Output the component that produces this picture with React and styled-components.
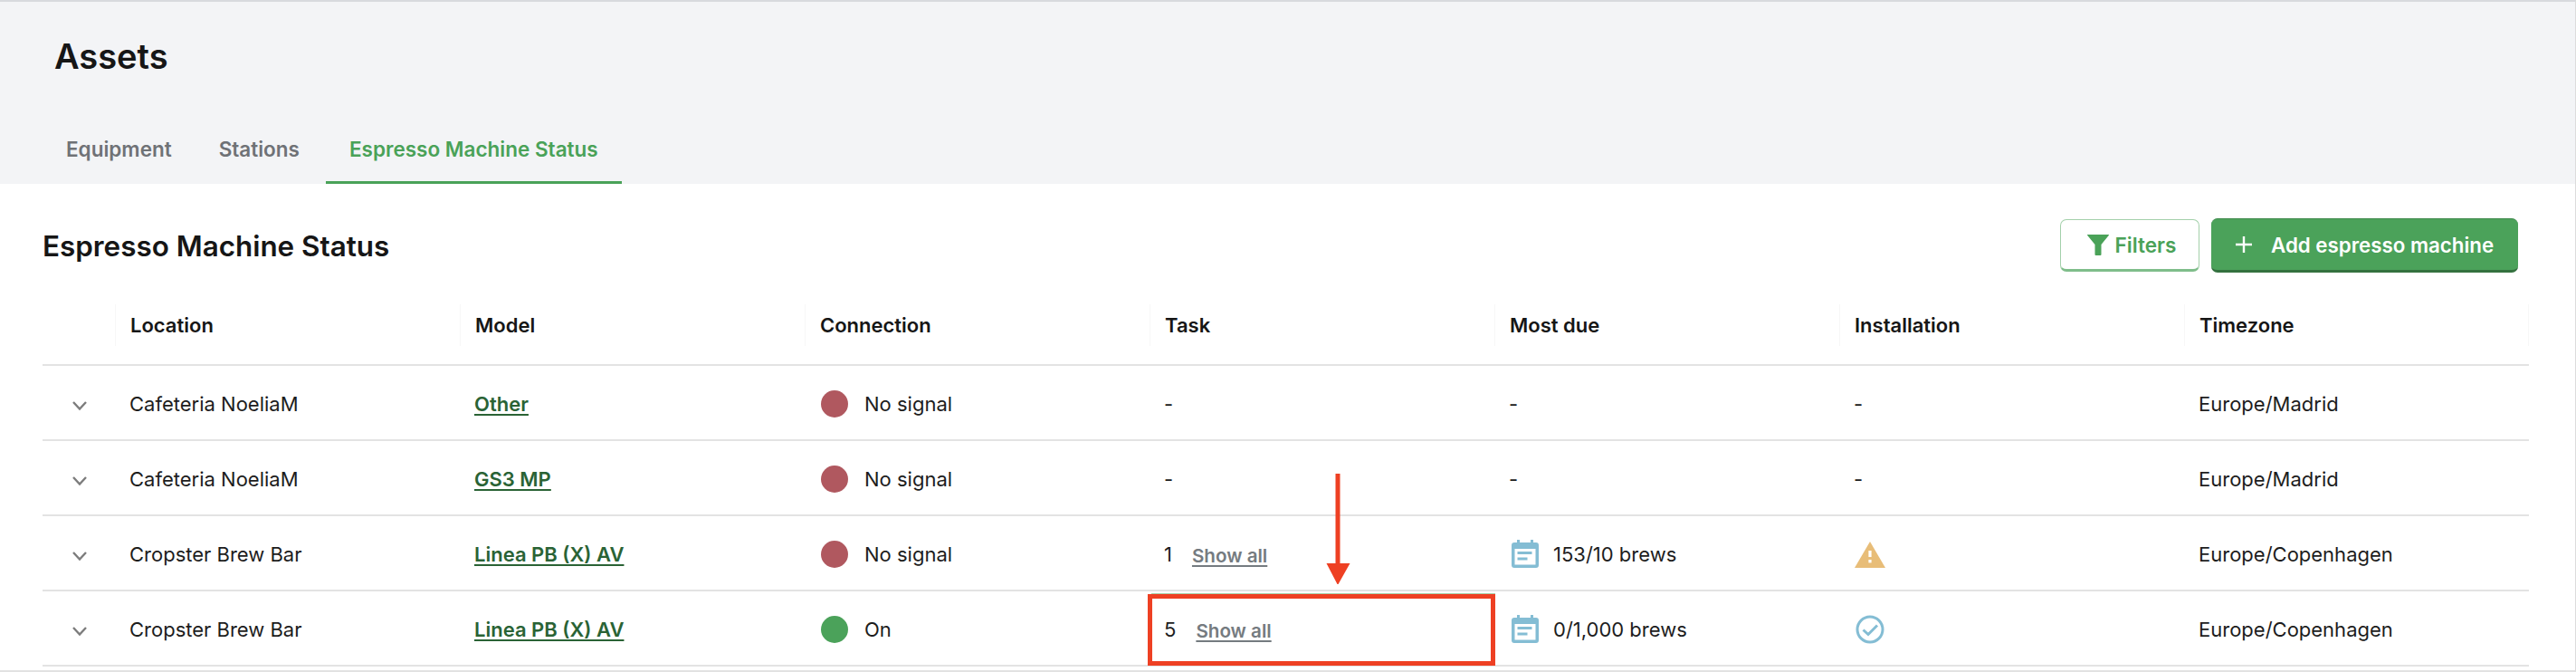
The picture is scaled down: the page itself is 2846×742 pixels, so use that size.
import React from "react";
import styled, { createGlobalStyle } from "styled-components";

const GlobalStyle = createGlobalStyle`
  html, body {
    margin: 0;
    padding: 0;
    background: #ffffff;
  }
  * {
    box-sizing: border-box;
  }
`;

const Page = styled.div`
  position: relative;
  width: 2846px;
  height: 742px;
  overflow: hidden;
  background: #ffffff;
  color: #1a1a1a;
  font-family: Inter, "Liberation Sans", sans-serif;
  border-top: 2px solid #d8dadd;
  border-right: 1px solid #dcdcdc;
  border-bottom: 2px solid #e2e2e2;
`;

const Header = styled.header`
  height: 201px;
  background: #f3f4f6;
  display: flex;
  flex-direction: column;
  justify-content: space-between;
`;

const PageTitle = styled.h1`
  margin: 0;
  padding: 38px 0 0 60px;
  font-size: 38px;
  line-height: 44px;
  font-weight: 600;
  color: #161616;
`;

const Tabs = styled.nav`
  display: flex;
  padding-left: 47px;
`;

const Tab = styled.div`
  height: 60px;
  margin-left: ${(p) => (p.$active ? "3px" : "0")};
  padding: 0 26px 14px;
  display: flex;
  align-items: center;
  font-size: 22.5px;
  font-weight: 600;
  color: ${(p) => (p.$active ? "#4aa258" : "#6f7276")};
  border-bottom: 3px solid ${(p) => (p.$active ? "#4aa258" : "transparent")};
`;

const Section = styled.section`
  padding: 0 51px 0 47px;
`;

const Toolbar = styled.div`
  height: 133px;
  padding: 38px 12px 0 0;
  display: flex;
  align-items: flex-start;
  justify-content: space-between;
`;

const SectionTitle = styled.h2`
  margin: 0;
  padding-top: 9px;
  font-size: 31.4px;
  line-height: 44px;
  font-weight: 600;
  color: #161616;
`;

const Actions = styled.div`
  display: flex;
  align-items: center;
  gap: 13px;
`;

const OutlineButton = styled.button`
  width: 154px;
  height: 58px;
  padding: 0 0 0 3px;
  display: flex;
  align-items: center;
  justify-content: center;
  gap: 6px;
  background: #ffffff;
  border: 1px solid #a3d0aa;
  border-bottom: 3px solid #7fbd8a;
  border-radius: 7px;
  color: #4aa258;
  font: 600 22.6px Inter, "Liberation Sans", sans-serif;
`;

const PrimaryButton = styled.button`
  width: 339px;
  height: 60px;
  padding: 0 0 0 26px;
  display: flex;
  align-items: center;
  gap: 20px;
  background: #4ba25a;
  border: none;
  border-top: 1px solid #3f8a4c;
  border-bottom: 3px solid #34713f;
  border-radius: 7px;
  color: #ffffff;
  font: 600 22.3px Inter, "Liberation Sans", sans-serif;
`;

const Row = styled.div`
  display: grid;
  grid-template-columns: 80px repeat(7, 381px);
  height: ${(p) => (p.$head ? "68px" : "83px")};
  padding-top: ${(p) => (p.$head ? "0" : "2px")};
  align-items: ${(p) => (p.$head ? "start" : "center")};
  border-bottom: 2px solid #e3e3e3;
`;

const HeadCell = styled.div`
  height: 46px;
  padding-left: 16px;
  display: flex;
  align-items: center;
  font-size: 22px;
  font-weight: 600;
  color: #161616;
  border-left: 1px solid #f7f7f7;
  border-right: ${(p) => (p.$last ? "1px solid #f7f7f7" : "none")};
`;

const Cell = styled.div`
  padding-left: 16px;
  display: flex;
  align-items: center;
  font-size: 22px;
  font-weight: 400;
  color: #1d1d1d;
`;

const IconCell = styled.div`
  display: flex;
  align-items: center;
  padding: 4px 0 0 32px;
`;

const ModelLink = styled.a`
  color: #2a6335;
  font-size: 22px;
  font-weight: 600;
  text-decoration: underline;
  text-underline-offset: 3px;
`;

const Dot = styled.span`
  width: 30px;
  height: 30px;
  margin: 0 18px 0 2px;
  border-radius: 50%;
  background: ${(p) => (p.$on ? "#4ba25a" : "#b0585f")};
`;

const ShowAll = styled.a`
  margin-left: 22px;
  margin-top: 4px;
  color: #757b80;
  font-size: 20.6px;
  font-weight: 600;
  text-decoration: underline;
  text-decoration-thickness: 2px;
  text-underline-offset: 3px;
`;

const DueIcon = styled.svg`
  width: 30px;
  height: 32px;
  margin: -2px 16px 0 3px;
  flex: none;
`;

const StatusIcon = styled.svg`
  width: 34px;
  height: 32px;
  margin-left: 1px;
`;

const HighlightBox = styled.div`
  position: absolute;
  left: 1268px;
  top: 654px;
  width: 384px;
  height: 79px;
  border: 5px solid #ee4023;
  box-shadow: 2px -3px 0 -2px #a8cfa8;
`;

const ArrowMark = styled.svg`
  position: absolute;
  left: 1464px;
  top: 521px;
  width: 28px;
  height: 122px;
`;

const columns = ["Location", "Model", "Connection", "Task", "Most due", "Installation", "Timezone"];

const machines = [
  { location: "Cafeteria NoeliaM", model: "Other", on: false, tasks: null, due: null, install: null, zone: "Europe/Madrid" },
  { location: "Cafeteria NoeliaM", model: "GS3 MP", on: false, tasks: null, due: null, install: null, zone: "Europe/Madrid" },
  { location: "Cropster Brew Bar", model: "Linea PB (X) AV", on: false, tasks: "1", due: "153/10 brews", install: "warning", zone: "Europe/Copenhagen" },
  { location: "Cropster Brew Bar", model: "Linea PB (X) AV", on: true, tasks: "5", due: "0/1,000 brews", install: "ok", zone: "Europe/Copenhagen" },
];

const FilterIcon = () => (
  <svg width="26" height="25" viewBox="0 0 26 25">
    <path d="M1 1.5a.5.5 0 0 1 .5-.5h23a.5.5 0 0 1 .4.8L16.5 12v11a1 1 0 0 1-1 1h-5a1 1 0 0 1-1-1V12L1.1 1.8A.5.5 0 0 1 1 1.5z" fill="#4aa258" />
  </svg>
);

const PlusIcon = () => (
  <svg width="20" height="20" viewBox="0 0 20 20">
    <path d="M10 1v18M1 10h18" stroke="#ffffff" strokeWidth="2.4" fill="none" />
  </svg>
);

const Chevron = () => (
  <svg width="18" height="12" viewBox="0 0 18 12">
    <path d="M2 2l7 7.5L16 2" stroke="#7c7c7c" strokeWidth="2.4" fill="none" />
  </svg>
);

const CalendarIcon = () => (
  <DueIcon viewBox="0 0 30 32">
    <path d="M6 1h3v3h12V1h3v3h3a3 3 0 0 1 3 3v22a3 3 0 0 1-3 3H3a3 3 0 0 1-3-3V7a3 3 0 0 1 3-3h3z" fill="#84bdd4" />
    <rect x="3.5" y="11" width="23" height="17.5" fill="#ffffff" />
    <rect x="6.5" y="14" width="16" height="3" fill="#84bdd4" />
    <rect x="6.5" y="20.5" width="11" height="3" fill="#84bdd4" />
  </DueIcon>
);

const WarningIcon = () => (
  <StatusIcon viewBox="0 0 34 32">
    <path d="M17 2L34 31H0z" fill="#e8bd78" />
    <rect x="15.4" y="12" width="3.2" height="7" fill="#ffffff" />
    <rect x="15.4" y="22" width="3.2" height="3.4" fill="#ffffff" />
  </StatusIcon>
);

const CheckIcon = () => (
  <StatusIcon viewBox="0 0 34 32">
    <circle cx="17" cy="16" r="14" stroke="#84bdd4" strokeWidth="3" fill="none" />
    <path d="M9.5 16.5l5.5 5L25 11.5" stroke="#84bdd4" strokeWidth="3" fill="none" />
  </StatusIcon>
);

const App = () => {
  return (
    <Page>
      <GlobalStyle />
      <Header>
        <PageTitle>Assets</PageTitle>
        <Tabs>
          <Tab>Equipment</Tab>
          <Tab>Stations</Tab>
          <Tab $active>Espresso Machine Status</Tab>
        </Tabs>
      </Header>
      <Section>
        <Toolbar>
          <SectionTitle>Espresso Machine Status</SectionTitle>
          <Actions>
            <OutlineButton>
              <FilterIcon />
              Filters
            </OutlineButton>
            <PrimaryButton>
              <PlusIcon />
              Add espresso machine
            </PrimaryButton>
          </Actions>
        </Toolbar>
        <Row $head>
          <div />
          {columns.map((name, i) => (
            <HeadCell key={name} $last={i === columns.length - 1}>
              {name}
            </HeadCell>
          ))}
        </Row>
        {machines.map((m, i) => (
          <Row key={i}>
            <IconCell>
              <Chevron />
            </IconCell>
            <Cell>{m.location}</Cell>
            <Cell>
              <ModelLink>{m.model}</ModelLink>
            </Cell>
            <Cell>
              <Dot $on={m.on} />
              {m.on ? "On" : "No signal"}
            </Cell>
            <Cell>
              {m.tasks || "-"}
              {m.tasks && <ShowAll>Show all</ShowAll>}
            </Cell>
            <Cell>
              {m.due && <CalendarIcon />}
              {m.due || "-"}
            </Cell>
            <Cell>
              {m.install === "warning" && <WarningIcon />}
              {m.install === "ok" && <CheckIcon />}
              {!m.install && "-"}
            </Cell>
            <Cell>{m.zone}</Cell>
          </Row>
        ))}
      </Section>
      <ArrowMark viewBox="0 0 28 122">
        <path d="M11.5 0h5v99h11L14 123 1.5 99h10z" fill="#ee4023" />
      </ArrowMark>
      <HighlightBox />
    </Page>
  );
};

export default App;
